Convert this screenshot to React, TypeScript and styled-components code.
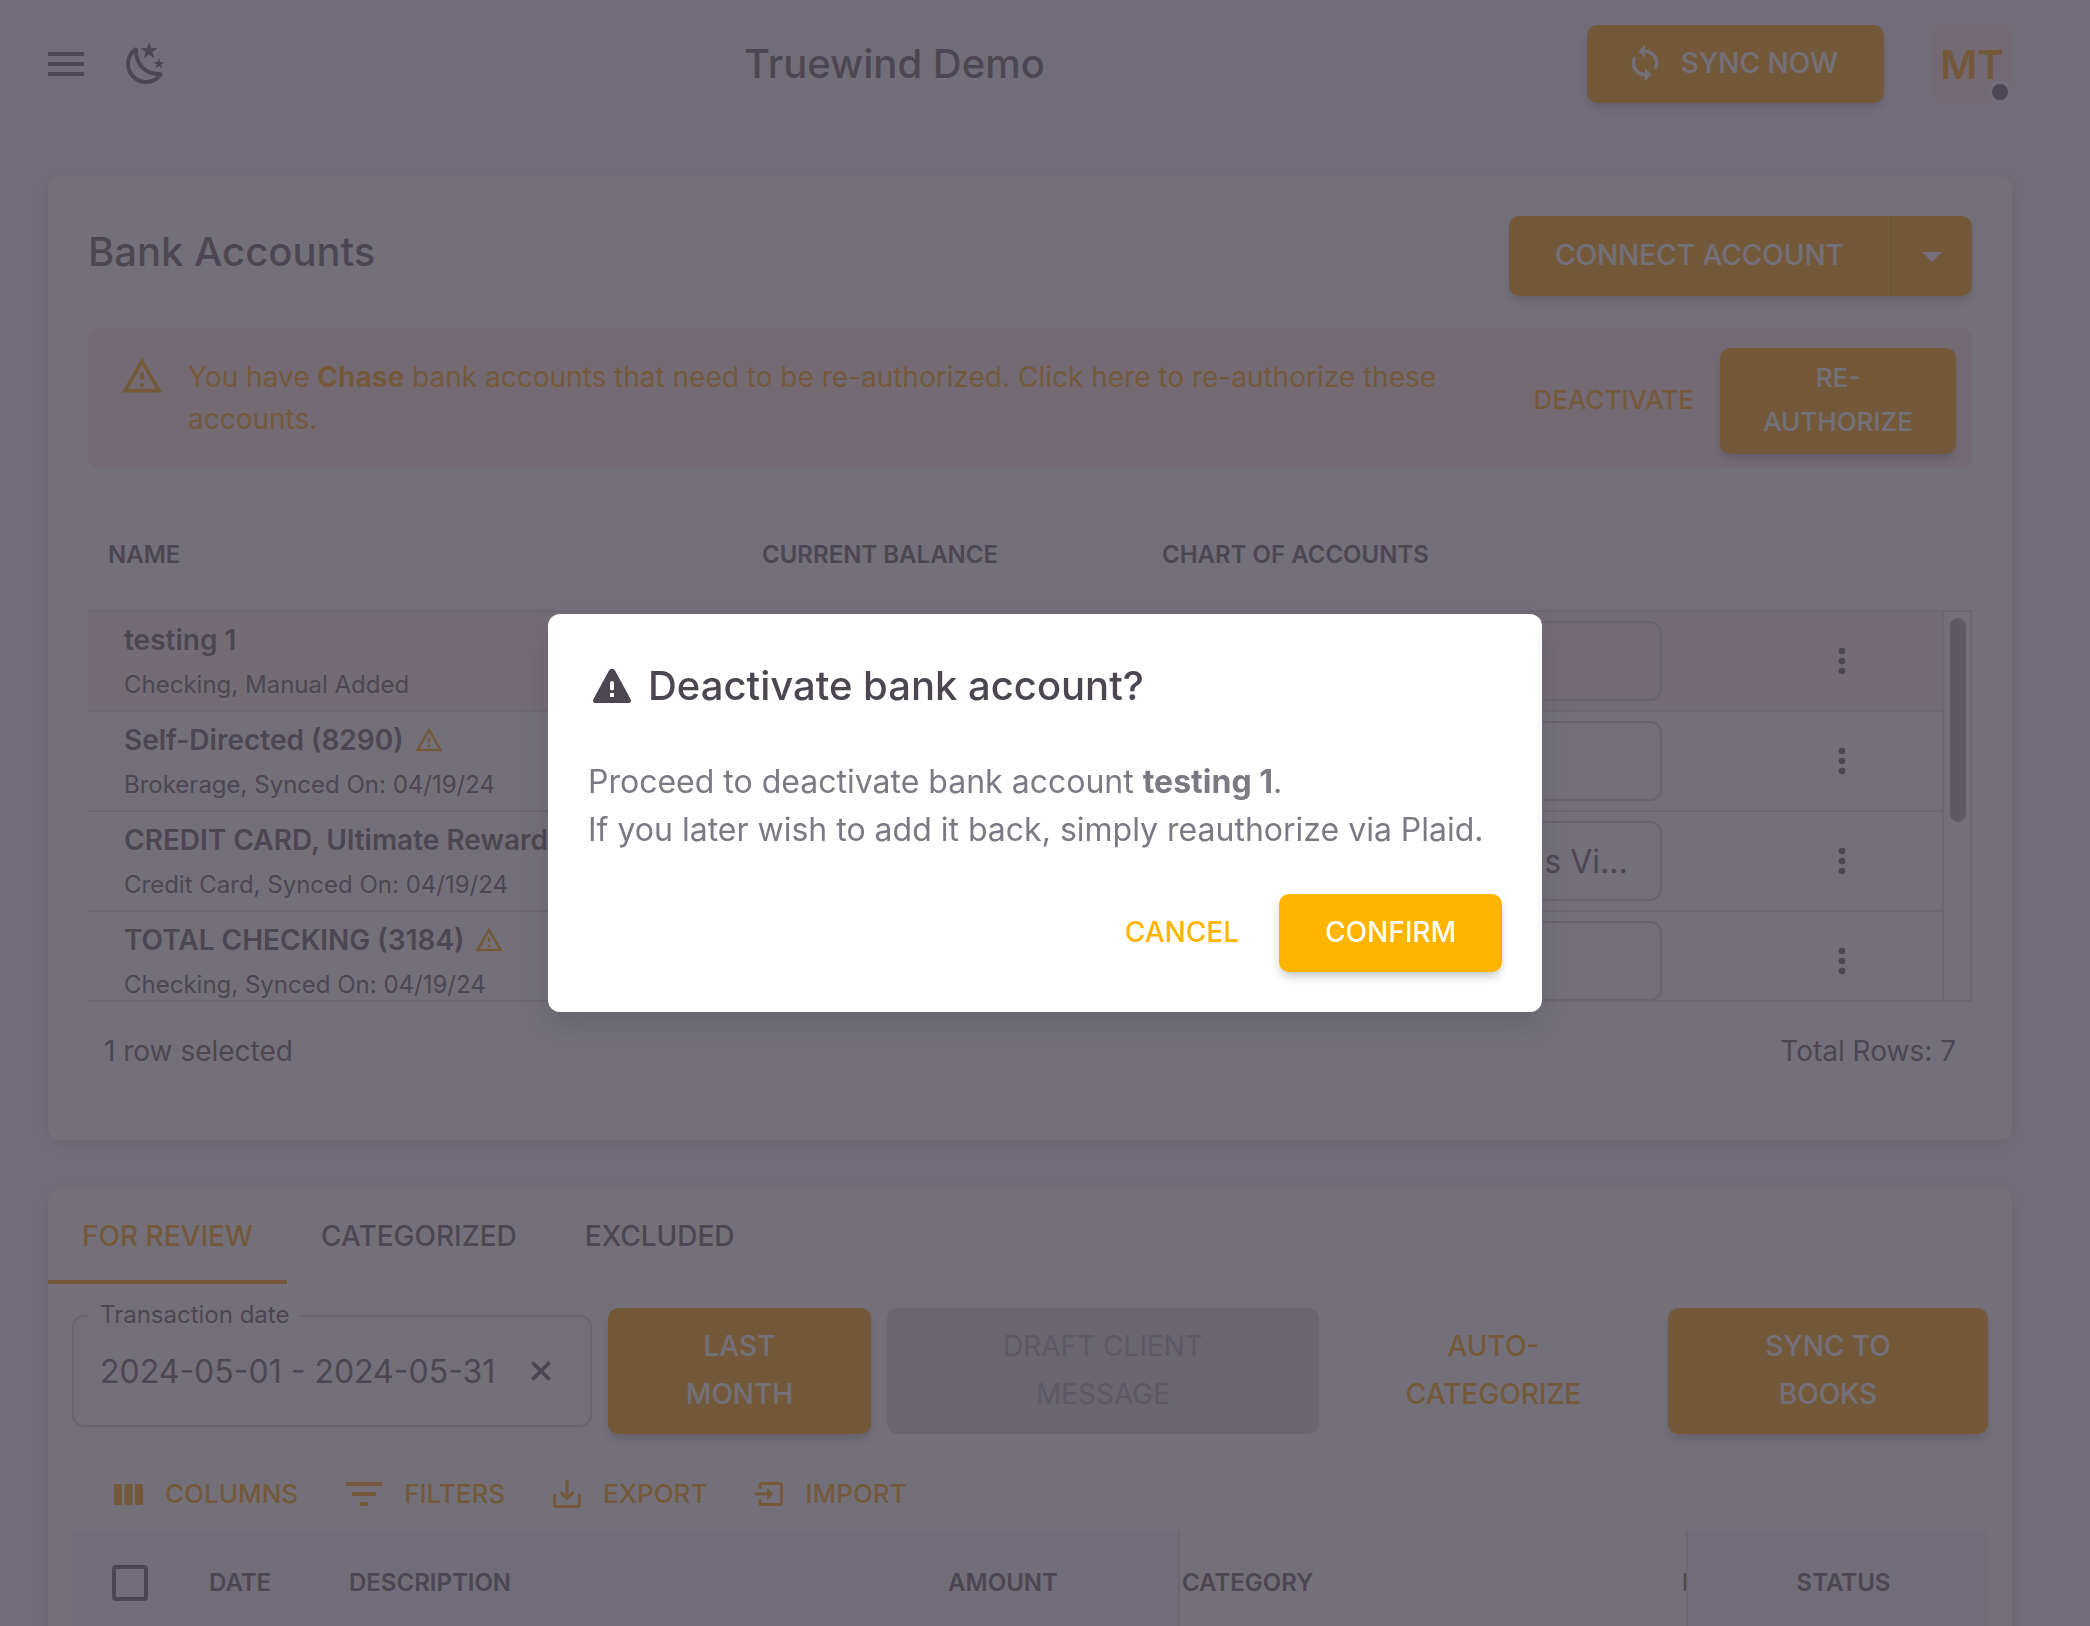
import React from "react";
import styled, { createGlobalStyle, css } from "styled-components";

const ink = "#7b7276";
const amber = "#ffb12a";
const line = "#e6dfe1";
const outline = "#dcd5d4";

const GlobalStyle = createGlobalStyle`
  *, *::before, *::after { box-sizing: border-box; }
  body { margin: 0; background: #f9f8fb; overflow: hidden; }
  body, button, input, select { font-family: Inter, "Liberation Sans", sans-serif; }
  button { cursor: pointer; }
  h1, h2, p { margin: 0; }
  svg { display: block; flex: none; fill: currentColor; }
`;

const Page = styled.div`
  height: 100vh;
  overflow: hidden;
  padding: 0 78px 0 48px;
  color: ${ink};
  font-size: 28px;
  line-height: 42px;
`;

const TopBar = styled.header`
  display: flex;
  align-items: center;
  justify-content: space-between;
  height: 128px;
  margin-bottom: 48px;
`;

const TopBarGroup = styled.div<{ $gap: number }>`
  display: flex;
  align-items: center;
  gap: ${(p) => p.$gap}px;
`;

const NavIcons = styled(TopBarGroup)`
  margin-left: -6px;
  padding-right: 32px;
`;

const Heading = styled.h1`
  font-size: 40px;
  line-height: 64px;
  font-weight: 500;
`;

const CardTitle = styled(Heading).attrs({ as: "h2" })``;

const IconButton = styled.button`
  display: inline-flex;
  align-items: center;
  justify-content: center;
  padding: 0;
  border: 0;
  background: none;
  color: inherit;
`;

const raised = css`
  box-shadow: 0 6px 10px -2px rgba(58, 53, 65, 0.3);
`;

type ButtonKind = "solid" | "text" | "muted";

const Button = styled.button<{ $kind?: ButtonKind; $size?: "small" | "medium"; $strong?: boolean }>`
  display: inline-flex;
  align-items: center;
  justify-content: center;
  gap: 16px;
  border: 0;
  border-radius: 10px;
  font-weight: 500;
  text-transform: uppercase;
  text-align: center;
  ${(p) =>
    p.$size === "small"
      ? css`
          padding: 8px 40px 10px;
          font-size: 26px;
          line-height: 44px;
        `
      : css`
          padding: 14px 46px 16px;
          font-size: 28px;
          line-height: 48px;
        `}
  ${(p) => {
    if (p.$kind === "text") {
      return css`
        padding-left: 16px;
        padding-right: 16px;
        background: none;
        color: ${p.$strong ? "#ffb400" : amber};
      `;
    }
    if (p.$kind === "muted") {
      return css`
        background: #dcdddd;
        color: #b4b0b4;
        font-weight: 400;
      `;
    }
    return css`
      background: ${p.$strong ? "#ffb400" : amber};
      color: #fff;
      ${raised}
    `;
  }}
`;

const SyncButton = styled(Button)`
  padding-left: 38px;
`;

const Avatar = styled.button`
  position: relative;
  display: grid;
  place-items: center;
  width: 80px;
  height: 80px;
  padding: 0;
  border: 0;
  border-radius: 12px;
  background: #ffece9;
  color: ${amber};
  font-size: 40px;
  font-weight: 600;
`;

const Presence = styled.span`
  position: absolute;
  right: 0;
  bottom: 0;
  width: 24px;
  height: 24px;
  border: 4px solid #f9f8fb;
  border-radius: 50%;
  background: ${ink};
`;

const Card = styled.section`
  margin-bottom: 48px;
  border-radius: 12px;
  background: #fff;
  box-shadow: 0 4px 20px rgba(58, 53, 65, 0.14);
`;

const AccountsCard = styled(Card)`
  padding: 40px;
`;

const CardHeader = styled.div`
  display: flex;
  justify-content: space-between;
  align-items: flex-start;
  margin-bottom: 32px;
  & > h2 { padding-top: 4px; }
`;

const SplitButton = styled.div`
  display: flex;
  border-radius: 10px;
  ${raised}
  & > button { height: 80px; box-shadow: none; }
  & > button:first-child { border-radius: 10px 0 0 10px; border-right: 2px solid #f2a422; }
  & > button:last-child { width: 80px; padding: 0; border-radius: 0 10px 10px 0; }
`;

const Alert = styled.div`
  display: flex;
  align-items: flex-start;
  height: 140px;
  margin-bottom: 30px;
  padding: 20px 16px 14px 32px;
  border-radius: 10px;
  background: #ffece9;
  color: ${amber};
`;

const AlertIcon = styled.span`
  margin: 6px 24px 0 0;
`;

const AlertText = styled.p`
  flex: 1;
  padding: 8px 28px 0 0;
`;

const AlertActions = styled.div`
  display: flex;
  align-items: center;
  gap: 10px;
  & > button:last-child { width: 236px; }
`;

const AccountsGrid = styled.div`
  display: flex;
`;

const AccountsTable = styled.table`
  display: block;
  flex: 1;
  min-width: 0;
`;

const accountColumns = css`
  display: grid;
  grid-template-columns: minmax(0, 1fr) 400px 600px 200px;
`;

const AccountsHead = styled.thead`
  display: block;
  & > tr { ${accountColumns} height: 112px; padding-top: 2px; align-items: center; }
`;

const HeadCell = styled.th`
  padding: 0 20px;
  text-align: left;
  font-size: 24px;
  line-height: 36px;
  font-weight: 600;
  text-transform: uppercase;
  white-space: nowrap;
`;

const AccountsBody = styled.tbody`
  display: block;
  height: 392px;
  overflow: hidden;
  border-top: 2px solid ${line};
  border-bottom: 2px solid ${line};
`;

const AccountRow = styled.tr<{ $selected?: boolean }>`
  ${accountColumns}
  height: 100px;
  align-items: center;
  border-bottom: 2px solid ${line};
  background: ${(p) => (p.$selected ? "#fff1ee" : "transparent")};
`;

const Cell = styled.td<{ $center?: boolean }>`
  display: flex;
  justify-content: ${(p) => (p.$center ? "center" : "flex-start")};
  padding: 0 20px;
`;

const NameCell = styled(Cell)`
  flex-direction: column;
  padding: 4px 36px 0;
`;

const AccountName = styled.span`
  display: flex;
  align-items: center;
  gap: 10px;
  line-height: 44px;
  font-weight: 600;
  white-space: nowrap;
  & > svg { color: ${amber}; }
`;

const AccountMeta = styled.span`
  font-size: 24px;
  line-height: 46px;
`;

const AccountSelect = styled.select`
  appearance: none;
  width: 500px;
  height: 80px;
  padding: 0 28px;
  border: 2px solid ${outline};
  border-radius: 12px;
  background: transparent;
  color: inherit;
  font-size: 32px;
`;

const ScrollTrack = styled.div`
  width: 30px;
  margin-top: 112px;
  padding: 6px;
  border: 2px solid ${line};
`;

const ScrollThumb = styled.div`
  width: 16px;
  height: 204px;
  margin: 0 auto;
  border-radius: 8px;
  background: #bab4b6;
`;

const GridFooter = styled.div`
  display: flex;
  align-items: center;
  justify-content: space-between;
  height: 98px;
  padding: 0 16px;
`;

const Tabs = styled.div`
  display: flex;
`;

const Tab = styled.button<{ $active?: boolean }>`
  height: 96px;
  padding: 4px 34px 0;
  border: 0;
  border-bottom: 4px solid ${(p) => (p.$active ? amber : "transparent")};
  background: none;
  color: ${(p) => (p.$active ? amber : ink)};
  font-size: 28px;
  line-height: 44px;
  font-weight: 500;
  text-transform: uppercase;
`;

const ReviewBody = styled.div`
  padding: 24px;
`;

const ActionRow = styled.div`
  display: grid;
  grid-template-columns:
    minmax(0, 520fr) minmax(0, 263fr) minmax(0, 432fr)
    minmax(0, 317fr) minmax(0, 320fr);
  gap: 16px;
  align-items: center;
  margin-bottom: 24px;
  & > button { height: 126px; }
`;

const FilterButton = styled(Button)`
  padding-left: 64px;
  padding-right: 64px;
`;

const DateField = styled.div`
  position: relative;
  display: flex;
  align-items: center;
  height: 112px;
  padding: 0 32px 0 26px;
  border: 2px solid ${outline};
  border-radius: 12px;
`;

const DateLabel = styled.label`
  position: absolute;
  top: -20px;
  left: 14px;
  padding: 0 12px;
  background: #fff;
  font-size: 24px;
  line-height: 36px;
`;

const DateInput = styled.input`
  flex: 1;
  min-width: 0;
  padding: 0;
  border: 0;
  outline: 0;
  background: transparent;
  color: inherit;
  font-size: 32px;
`;

const GridToolbar = styled.div`
  display: flex;
  align-items: center;
  gap: 48px;
  height: 72px;
  padding: 0 42px;
`;

const ToolButton = styled.button`
  display: flex;
  align-items: center;
  gap: 22px;
  padding: 0;
  border: 0;
  background: none;
  color: ${amber};
  font-size: 26px;
  line-height: 44px;
  font-weight: 500;
  text-transform: uppercase;
`;

const TransactionsTable = styled.table`
  display: block;
  & > thead { display: block; }
  & tr { display: grid; grid-template-columns: 118px 140px minmax(0, 1fr) 350px 508px 302px; }
`;

const TxHead = styled.th<{ $align?: string; $plain?: boolean; $edge?: boolean }>`
  height: 106px;
  padding: 0 19px;
  background: ${(p) => (p.$plain ? "#fff" : "#f9f8fb")};
  border-left: ${(p) => (p.$edge ? `2px solid ${line}` : "0")};
  font-size: 24px;
  line-height: 106px;
  font-weight: 600;
  text-align: ${(p) => p.$align ?? "left"};
  text-transform: uppercase;
  white-space: nowrap;
  overflow: hidden;
`;

const SplitHead = styled(TxHead)`
  display: grid;
  grid-template-columns: 1fr 4px;
  padding: 0 0 0 2px;
  & > span { overflow: hidden; }
`;

const StatusHead = styled(TxHead)`
  padding-left: 30px;
`;

const Checkbox = styled.input`
  appearance: none;
  display: block;
  width: 36px;
  height: 36px;
  margin: 35px 21px;
  border: 4px solid ${ink};
  border-radius: 4px;
`;

const Backdrop = styled.div`
  position: fixed;
  inset: 0;
  display: grid;
  place-items: center;
  background: rgba(56, 51, 65, 0.7);
`;

const Dialog = styled.div`
  min-width: 994px;
  padding: 40px;
  border-radius: 12px;
  background: #fff;
  color: #7d7983;
  font-size: 32px;
  line-height: 48px;
  box-shadow: 0 12px 28px rgba(58, 53, 65, 0.2);
`;

const DialogTitle = styled.div`
  display: flex;
  align-items: center;
  gap: 12px;
  margin-bottom: 40px;
  color: #4c4651;
`;

const DialogActions = styled.div`
  display: flex;
  justify-content: flex-end;
  gap: 24px;
  margin-top: 40px;
`;

const Icon = ({ d, size, box = "0 0 24 24" }: { d: string; size: number; box?: string }) => (
  <svg width={size} height={size} viewBox={box} aria-hidden="true">
    <path d={d} />
  </svg>
);

const MENU = "M3 6h18v2H3V6m0 5h18v2H3v-2m0 5h18v2H3v-2Z";
const NIGHT =
  "M17.75 4.09l-2.53 1.94.91 3.06-2.63-1.81-2.63 1.81.91-3.06-2.53-1.94L12.44 4l1.06-3 1.06 3 3.19.09m3.5 6.91l-1.64 1.25.59 1.98-1.7-1.17-1.7 1.17.59-1.98L15.75 11l2.06-.05L18.5 9l.69 1.95 2.06.05m-2.28 4.95c.83-.08 1.72 1.1 1.19 1.85-.32.45-.66.87-1.08 1.27C15.17 23 8.84 23 4.94 19.07c-3.91-3.9-3.91-10.24 0-14.14.4-.4.82-.76 1.27-1.08.75-.53 1.93.36 1.85 1.19-.27 2.86.69 5.83 2.89 8.02a9.96 9.96 0 0 0 8.02 2.89m-1.64 2.02a12.08 12.08 0 0 1-7.8-3.47c-2.17-2.19-3.33-5-3.49-7.82-2.81 3.14-2.7 7.96.31 10.98 3.02 3.01 7.84 3.12 10.98.31Z";
const SYNC =
  "M12 18a6 6 0 0 1-6-6c0-1 .25-1.97.7-2.8L5.24 7.74A7.93 7.93 0 0 0 4 12a8 8 0 0 0 8 8v3l4-4-4-4m0-11V1L8 5l4 4V6a6 6 0 0 1 6 6c0 1-.25 1.97-.7 2.8l1.46 1.46A7.93 7.93 0 0 0 20 12a8 8 0 0 0-8-8Z";
const ALERT_OUTLINE = "M12 2L1 21h22M12 6l7.53 13H4.47M11 10v4h2v-4m-2 6v2h2v-2";
const CARET = "M7 10l5 5 5-5H7Z";
const DOTS =
  "M12 16a2 2 0 1 1 0 4 2 2 0 0 1 0-4m0-6a2 2 0 1 1 0 4 2 2 0 0 1 0-4m0-6a2 2 0 1 1 0 4 2 2 0 0 1 0-4Z";
const CLOSE = "M19 6.800L17.200 5 12 10.200 6.800 5 5 6.800 10.200 12 5 17.200 6.800 19 12 13.800 17.200 19 19 17.200 13.800 12Z";

const ColumnsIcon = () => (
  <svg width="29" height="21" viewBox="0 0 29 21" aria-hidden="true">
    <rect width="8" height="21" rx="1" />
    <rect x="10.5" width="8" height="21" rx="1" />
    <rect x="21" width="8" height="21" rx="1" />
  </svg>
);

const FilterIcon = () => (
  <svg width="36" height="24" viewBox="0 0 36 24" aria-hidden="true">
    <path d="M0 0h36v4H0zM6 10h24v4H6zM14 20h8v4h-8z" />
  </svg>
);

const ExportIcon = () => (
  <svg width="28" height="28" viewBox="0 0 28 28" aria-hidden="true">
    <path
      d="M1.5 14v11a1.5 1.5 0 0 0 1.5 1.5h22a1.500 1.500 0 0 0 1.500-1.500V14M14 0v18M7.500 12l6.500 6.500 6.500-6.500"
      fill="none"
      stroke="currentColor"
      strokeWidth="3"
    />
  </svg>
);

const ImportIcon = () => (
  <svg width="28" height="24" viewBox="0 0 28 24" aria-hidden="true">
    <path
      d="M5 7V2.500A1 1 0 0 1 6 1.500h19.500a1 1 0 0 1 1 1v19a1 1 0 0 1-1 1H6a1 1 0 0 1-1-1V17M0 12h14"
      fill="none"
      stroke="currentColor"
      strokeWidth="3"
    />
    <path d="M12 6l6 6-6 6z" />
  </svg>
);

const DialogAlertIcon = () => (
  <svg width="48" height="48" viewBox="0 0 48 48" aria-hidden="true">
    <path
      fillRule="evenodd"
      d="M21 8.500a3.500 3.500 0 0 1 6 0l15.500 28.500c1.200 2.200 0 4-2 4h-33c-2 0-3.200-1.800-2-4zM22 21v5.500a2 2 0 0 0 4 0V21a2 2 0 0 0-4 0zM22 31v4h4v-4z"
    />
  </svg>
);

const accounts = [
  { name: "testing 1", meta: "Checking, Manual Added", selected: true },
  { name: "Self-Directed (8290)", meta: "Brokerage, Synced On: 04/19/24", warn: true },
  {
    name: "CREDIT CARD, Ultimate Rewards",
    meta: "Credit Card, Synced On: 04/19/24",
    ledger: "Chase Ultimate Rewards Vi...",
  },
  { name: "TOTAL CHECKING (3184)", meta: "Checking, Synced On: 04/19/24", warn: true },
];

export default function App() {
  return (
    <>
      <GlobalStyle />
      <Page>
        <TopBar>
          <NavIcons $gap={32}>
            <IconButton aria-label="Menu">
              <Icon d={MENU} size={48} />
            </IconButton>
            <IconButton aria-label="Dark mode">
              <Icon d={NIGHT} size={48} />
            </IconButton>
          </NavIcons>
          <Heading>Truewind Demo</Heading>
          <TopBarGroup $gap={48}>
            <SyncButton>
              <Icon d={SYNC} size={40} />
              Sync now
            </SyncButton>
            <Avatar aria-label="Account">
              MT
              <Presence />
            </Avatar>
          </TopBarGroup>
        </TopBar>

        <AccountsCard>
          <CardHeader>
            <CardTitle>Bank Accounts</CardTitle>
            <SplitButton>
              <Button>Connect account</Button>
              <Button aria-label="More connection options">
                <Icon d={CARET} size={48} />
              </Button>
            </SplitButton>
          </CardHeader>

          <Alert role="alert">
            <AlertIcon>
              <Icon d={ALERT_OUTLINE} size={44} />
            </AlertIcon>
            <AlertText>
              You have <b>Chase</b> bank accounts that need to be re-authorized. Click here to
              re-authorize these accounts.
            </AlertText>
            <AlertActions>
              <Button $kind="text" $size="small">
                Deactivate
              </Button>
              <Button $size="small">Re-authorize</Button>
            </AlertActions>
          </Alert>

          <AccountsGrid>
            <AccountsTable>
              <AccountsHead>
                <tr>
                  <HeadCell>Name</HeadCell>
                  <HeadCell>Current balance</HeadCell>
                  <HeadCell>Chart of accounts</HeadCell>
                  <HeadCell />
                </tr>
              </AccountsHead>
              <AccountsBody>
                {accounts.map((a) => (
                  <AccountRow key={a.name} $selected={a.selected}>
                    <NameCell>
                      <AccountName>
                        {a.name}
                        {a.warn && <Icon d={ALERT_OUTLINE} size={30} />}
                      </AccountName>
                      <AccountMeta>{a.meta}</AccountMeta>
                    </NameCell>
                    <Cell />
                    <Cell>
                      <AccountSelect aria-label={`Ledger account for ${a.name}`}>
                        <option>{a.ledger ?? ""}</option>
                      </AccountSelect>
                    </Cell>
                    <Cell $center>
                      <IconButton aria-label={`Actions for ${a.name}`}>
                        <Icon d={DOTS} size={40} />
                      </IconButton>
                    </Cell>
                  </AccountRow>
                ))}
              </AccountsBody>
            </AccountsTable>
            <ScrollTrack>
              <ScrollThumb />
            </ScrollTrack>
          </AccountsGrid>
          <GridFooter>
            <span>1 row selected</span>
            <span>Total Rows: 7</span>
          </GridFooter>
        </AccountsCard>

        <Card>
          <Tabs role="tablist">
            <Tab role="tab" aria-selected="true" $active>
              For review
            </Tab>
            <Tab role="tab">Categorized</Tab>
            <Tab role="tab">Excluded</Tab>
          </Tabs>
          <ReviewBody>
            <ActionRow>
              <DateField>
                <DateLabel htmlFor="tx-date">Transaction date</DateLabel>
                <DateInput id="tx-date" defaultValue="2024-05-01 - 2024-05-31" />
                <IconButton aria-label="Clear dates">
                  <Icon d={CLOSE} size={34} />
                </IconButton>
              </DateField>
              <FilterButton>Last month</FilterButton>
              <FilterButton $kind="muted" disabled>
                Draft client message
              </FilterButton>
              <FilterButton $kind="text">Auto-categorize</FilterButton>
              <FilterButton>Sync to books</FilterButton>
            </ActionRow>
            <GridToolbar>
              <ToolButton>
                <ColumnsIcon />
                Columns
              </ToolButton>
              <ToolButton>
                <FilterIcon />
                Filters
              </ToolButton>
              <ToolButton>
                <ExportIcon />
                Export
              </ToolButton>
              <ToolButton>
                <ImportIcon />
                Import
              </ToolButton>
            </GridToolbar>
            <TransactionsTable>
              <thead>
                <tr>
                  <TxHead>
                    <Checkbox type="checkbox" aria-label="Select all transactions" />
                  </TxHead>
                  <TxHead>Date</TxHead>
                  <TxHead>Description</TxHead>
                  <TxHead $align="center">Amount</TxHead>
                  <SplitHead $plain $edge>
                    <span>Category</span>
                    <span>F</span>
                  </SplitHead>
                  <StatusHead $edge $align="center">
                    Status
                  </StatusHead>
                </tr>
              </thead>
            </TransactionsTable>
          </ReviewBody>
        </Card>
      </Page>

      <Backdrop>
        <Dialog role="dialog" aria-modal="true" aria-labelledby="dialog-title">
          <DialogTitle>
            <DialogAlertIcon />
            <CardTitle id="dialog-title">Deactivate bank account?</CardTitle>
          </DialogTitle>
          <p>
            Proceed to deactivate bank account <b>testing 1</b>.
          </p>
          <p>If you later wish to add it back, simply reauthorize via Plaid.</p>
          <DialogActions>
            <Button $kind="text" $strong>
              Cancel
            </Button>
            <Button $strong>Confirm</Button>
          </DialogActions>
        </Dialog>
      </Backdrop>
    </>
  );
}
